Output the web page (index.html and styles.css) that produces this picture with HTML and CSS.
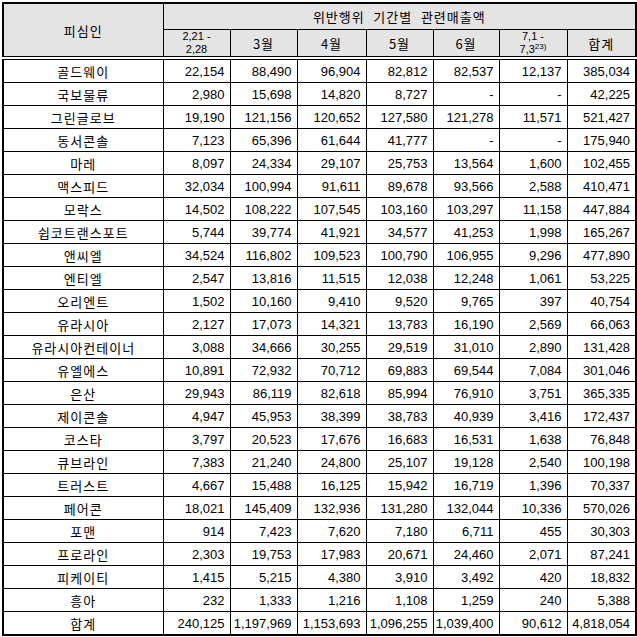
FILE: index.html
```html
<!DOCTYPE html>
<html lang="ko">
<head>
<meta charset="utf-8">
<link rel="stylesheet" href="styles.css">
</head>
<body>
<table class="sales">
  <colgroup>
    <col class="c-name"><col class="c67"><col class="c67"><col class="c69"><col class="c67"><col class="c66"><col class="c68"><col class="c69">
  </colgroup>
  <thead>
    <tr class="h1">
      <th rowspan="2" class="name-head">피심인</th>
      <th colspan="7">위반행위 기간별 관련매출액</th>
    </tr>
    <tr class="h2">
      <th class="small">2,21 -<br>2,28</th>
      <th>3월</th>
      <th>4월</th>
      <th>5월</th>
      <th>6월</th>
      <th class="small">7,1 -<br>7,3<sup>23)</sup></th>
      <th>합계</th>
    </tr>
  </thead>
  <tbody>
    <tr><td>골드웨이</td><td>22,154</td><td>88,490</td><td>96,904</td><td>82,812</td><td>82,537</td><td>12,137</td><td>385,034</td></tr>
    <tr><td>국보물류</td><td>2,980</td><td>15,698</td><td>14,820</td><td>8,727</td><td>-</td><td>-</td><td>42,225</td></tr>
    <tr><td>그린글로브</td><td>19,190</td><td>121,156</td><td>120,652</td><td>127,580</td><td>121,278</td><td>11,571</td><td>521,427</td></tr>
    <tr><td>동서콘솔</td><td>7,123</td><td>65,396</td><td>61,644</td><td>41,777</td><td>-</td><td>-</td><td>175,940</td></tr>
    <tr><td>마레</td><td>8,097</td><td>24,334</td><td>29,107</td><td>25,753</td><td>13,564</td><td>1,600</td><td>102,455</td></tr>
    <tr><td>맥스피드</td><td>32,034</td><td>100,994</td><td>91,611</td><td>89,678</td><td>93,566</td><td>2,588</td><td>410,471</td></tr>
    <tr><td>모락스</td><td>14,502</td><td>108,222</td><td>107,545</td><td>103,160</td><td>103,297</td><td>11,158</td><td>447,884</td></tr>
    <tr><td>쉽코트랜스포트</td><td>5,744</td><td>39,774</td><td>41,921</td><td>34,577</td><td>41,253</td><td>1,998</td><td>165,267</td></tr>
    <tr><td>앤씨엘</td><td>34,524</td><td>116,802</td><td>109,523</td><td>100,790</td><td>106,955</td><td>9,296</td><td>477,890</td></tr>
    <tr><td>엔티엘</td><td>2,547</td><td>13,816</td><td>11,515</td><td>12,038</td><td>12,248</td><td>1,061</td><td>53,225</td></tr>
    <tr><td>오리엔트</td><td>1,502</td><td>10,160</td><td>9,410</td><td>9,520</td><td>9,765</td><td>397</td><td>40,754</td></tr>
    <tr><td>유라시아</td><td>2,127</td><td>17,073</td><td>14,321</td><td>13,783</td><td>16,190</td><td>2,569</td><td>66,063</td></tr>
    <tr><td>유라시아컨테이너</td><td>3,088</td><td>34,666</td><td>30,255</td><td>29,519</td><td>31,010</td><td>2,890</td><td>131,428</td></tr>
    <tr><td>유엘에스</td><td>10,891</td><td>72,932</td><td>70,712</td><td>69,883</td><td>69,544</td><td>7,084</td><td>301,046</td></tr>
    <tr><td>은산</td><td>29,943</td><td>86,119</td><td>82,618</td><td>85,994</td><td>76,910</td><td>3,751</td><td>365,335</td></tr>
    <tr><td>제이콘솔</td><td>4,947</td><td>45,953</td><td>38,399</td><td>38,783</td><td>40,939</td><td>3,416</td><td>172,437</td></tr>
    <tr><td>코스타</td><td>3,797</td><td>20,523</td><td>17,676</td><td>16,683</td><td>16,531</td><td>1,638</td><td>76,848</td></tr>
    <tr><td>큐브라인</td><td>7,383</td><td>21,240</td><td>24,800</td><td>25,107</td><td>19,128</td><td>2,540</td><td>100,198</td></tr>
    <tr><td>트러스트</td><td>4,667</td><td>15,488</td><td>16,125</td><td>15,942</td><td>16,719</td><td>1,396</td><td>70,337</td></tr>
    <tr><td>페어콘</td><td>18,021</td><td>145,409</td><td>132,936</td><td>131,280</td><td>132,044</td><td>10,336</td><td>570,026</td></tr>
    <tr><td>포맨</td><td>914</td><td>7,423</td><td>7,620</td><td>7,180</td><td>6,711</td><td>455</td><td>30,303</td></tr>
    <tr><td>프로라인</td><td>2,303</td><td>19,753</td><td>17,983</td><td>20,671</td><td>24,460</td><td>2,071</td><td>87,241</td></tr>
    <tr><td>피케이티</td><td>1,415</td><td>5,215</td><td>4,380</td><td>3,910</td><td>3,492</td><td>420</td><td>18,832</td></tr>
    <tr><td>흥아</td><td>232</td><td>1,333</td><td>1,216</td><td>1,108</td><td>1,259</td><td>240</td><td>5,388</td></tr>
    <tr><td>합계</td><td>240,125</td><td>1,197,969</td><td>1,153,693</td><td>1,096,255</td><td>1,039,400</td><td>90,612</td><td>4,818,054</td></tr>
  </tbody>
</table>
</body>
</html>
```

FILE: styles.css
```css
html, body {
  margin: 0;
  padding: 0;
  background: #ffffff;
}
body {
  padding: 2px 0 0 2px;
}
.sales {
  border-collapse: collapse;
  table-layout: fixed;
  width: 633px;
  border: 2px solid #000;
  font-family: "Liberation Sans", "Noto Sans CJK KR", sans-serif;
  font-size: 13px;
  color: #000;
}
.c-name { width: 160px; }
.c66 { width: 66px; }
.c67 { width: 67px; }
.c68 { width: 68px; }
.c69 { width: 69px; }
.sales th,
.sales td {
  border: 1px solid #000;
  padding: 0 5px 0 0;
  overflow: hidden;
  white-space: nowrap;
}
.sales th {
  background: #e4e4e4;
  font-weight: normal;
  text-align: center;
  padding: 0;
  font-family: "Noto Sans CJK KR", "Liberation Sans", sans-serif;
  letter-spacing: 1px;
  word-spacing: 4px;
}
.sales thead tr.h1 th { height: 25px; }
.sales thead tr.h2 th {
  height: 26px;
  border-bottom: 4px double #000;
}
.sales th.name-head {
  border-bottom: 4px double #000;
}
.sales th.small {
  font-family: "Liberation Sans", sans-serif;
  font-size: 11px;
  line-height: 13px;
  letter-spacing: 0;
  word-spacing: 0;
}
.sales sup {
  font-size: 8px;
  line-height: 0;
  vertical-align: 4px;
}
.sales td {
  height: 22px;
  text-align: right;
  padding-right: 5px;
}
.sales td:first-child {
  text-align: center;
  padding: 0;
  font-family: "Noto Sans CJK KR", sans-serif;
  letter-spacing: 1px;
}
```
